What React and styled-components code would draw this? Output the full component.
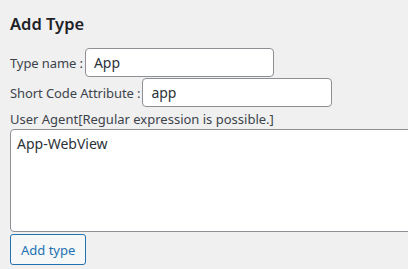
import { createGlobalStyle, styled } from "styled-components"
import { useState } from "react"

const GlobalStyle = createGlobalStyle`
  html, body {
    margin: 0;
    padding: 0;
    background: #f0f0f1;
    overflow: hidden;
  }
  body {
    font-family: "Noto Sans", "Open Sans", sans-serif;
    font-size: 13px;
    color: #3c434a;
  }
`

export default function App() {
  const [typeName, setTypeName] = useState("App")
  const [attr, setAttr] = useState("app")
  const [agent, setAgent] = useState("App-WebView")

  return (
    <Page>
      <GlobalStyle />
      <Heading>Add Type</Heading>
      <Form onSubmit={(e) => e.preventDefault()}>
        <Row>
          <Label htmlFor="type-name">Type name :</Label>
          <TextInput id="type-name" $width={189} value={typeName} onChange={(e) => setTypeName(e.target.value)} />
        </Row>
        <Row>
          <Label htmlFor="short-code">Short Code Attribute :</Label>
          <TextInput id="short-code" $width={190} value={attr} onChange={(e) => setAttr(e.target.value)} />
        </Row>
        <AgentLabel htmlFor="agent">User Agent[Regular expression is possible.]</AgentLabel>
        <Area id="agent" value={agent} onChange={(e) => setAgent(e.target.value)} />
        <Button type="submit">Add type</Button>
      </Form>
    </Page>
  )
}

const Page = styled.div`
  width: 408px;
  height: 269px;
  box-sizing: border-box;
  padding: 12px 0 0 10px;
  overflow: hidden;
`

const Heading = styled.h2`
  margin: 0 0 12px 0;
  font-size: 16.5px;
  font-weight: 600;
  line-height: 24px;
  color: #1d2327;
`

const Form = styled.form`
  display: flex;
  flex-direction: column;
  align-items: flex-start;
`

const Row = styled.div`
  display: flex;
  align-items: center;
  gap: 2px;
  margin-bottom: 1px;
`

const Label = styled.label`
  font-size: 13px;
  line-height: 18px;
  letter-spacing: -0.1px;
`

const TextInput = styled.input`
  box-sizing: border-box;
  width: ${(p) => p.$width}px;
  height: 29px;
  padding: 0 8px;
  border: 1px solid #8c8f94;
  border-radius: 4px;
  background: #fff;
  font-family: inherit;
  font-size: 14px;
  color: #2c3338;
  outline: none;
`

const AgentLabel = styled.label`
  font-size: 13px;
  line-height: 18px;
  margin-top: 2px;
`

const Area = styled.textarea`
  box-sizing: border-box;
  width: 420px;
  height: 103px;
  margin: 1px 0 2px 0;
  padding: 4px 6px;
  border: 1px solid #8c8f94;
  border-radius: 4px;
  background: #fff;
  font-family: inherit;
  font-size: 14px;
  line-height: 20px;
  color: #2c3338;
  resize: none;
  outline: none;
`

const Button = styled.button`
  box-sizing: border-box;
  height: 31px;
  padding: 0 10px;
  border: 1px solid #2271b1;
  border-radius: 3px;
  background: #f6f7f7;
  color: #2271b1;
  font-family: inherit;
  font-size: 13px;
  cursor: pointer;
`
